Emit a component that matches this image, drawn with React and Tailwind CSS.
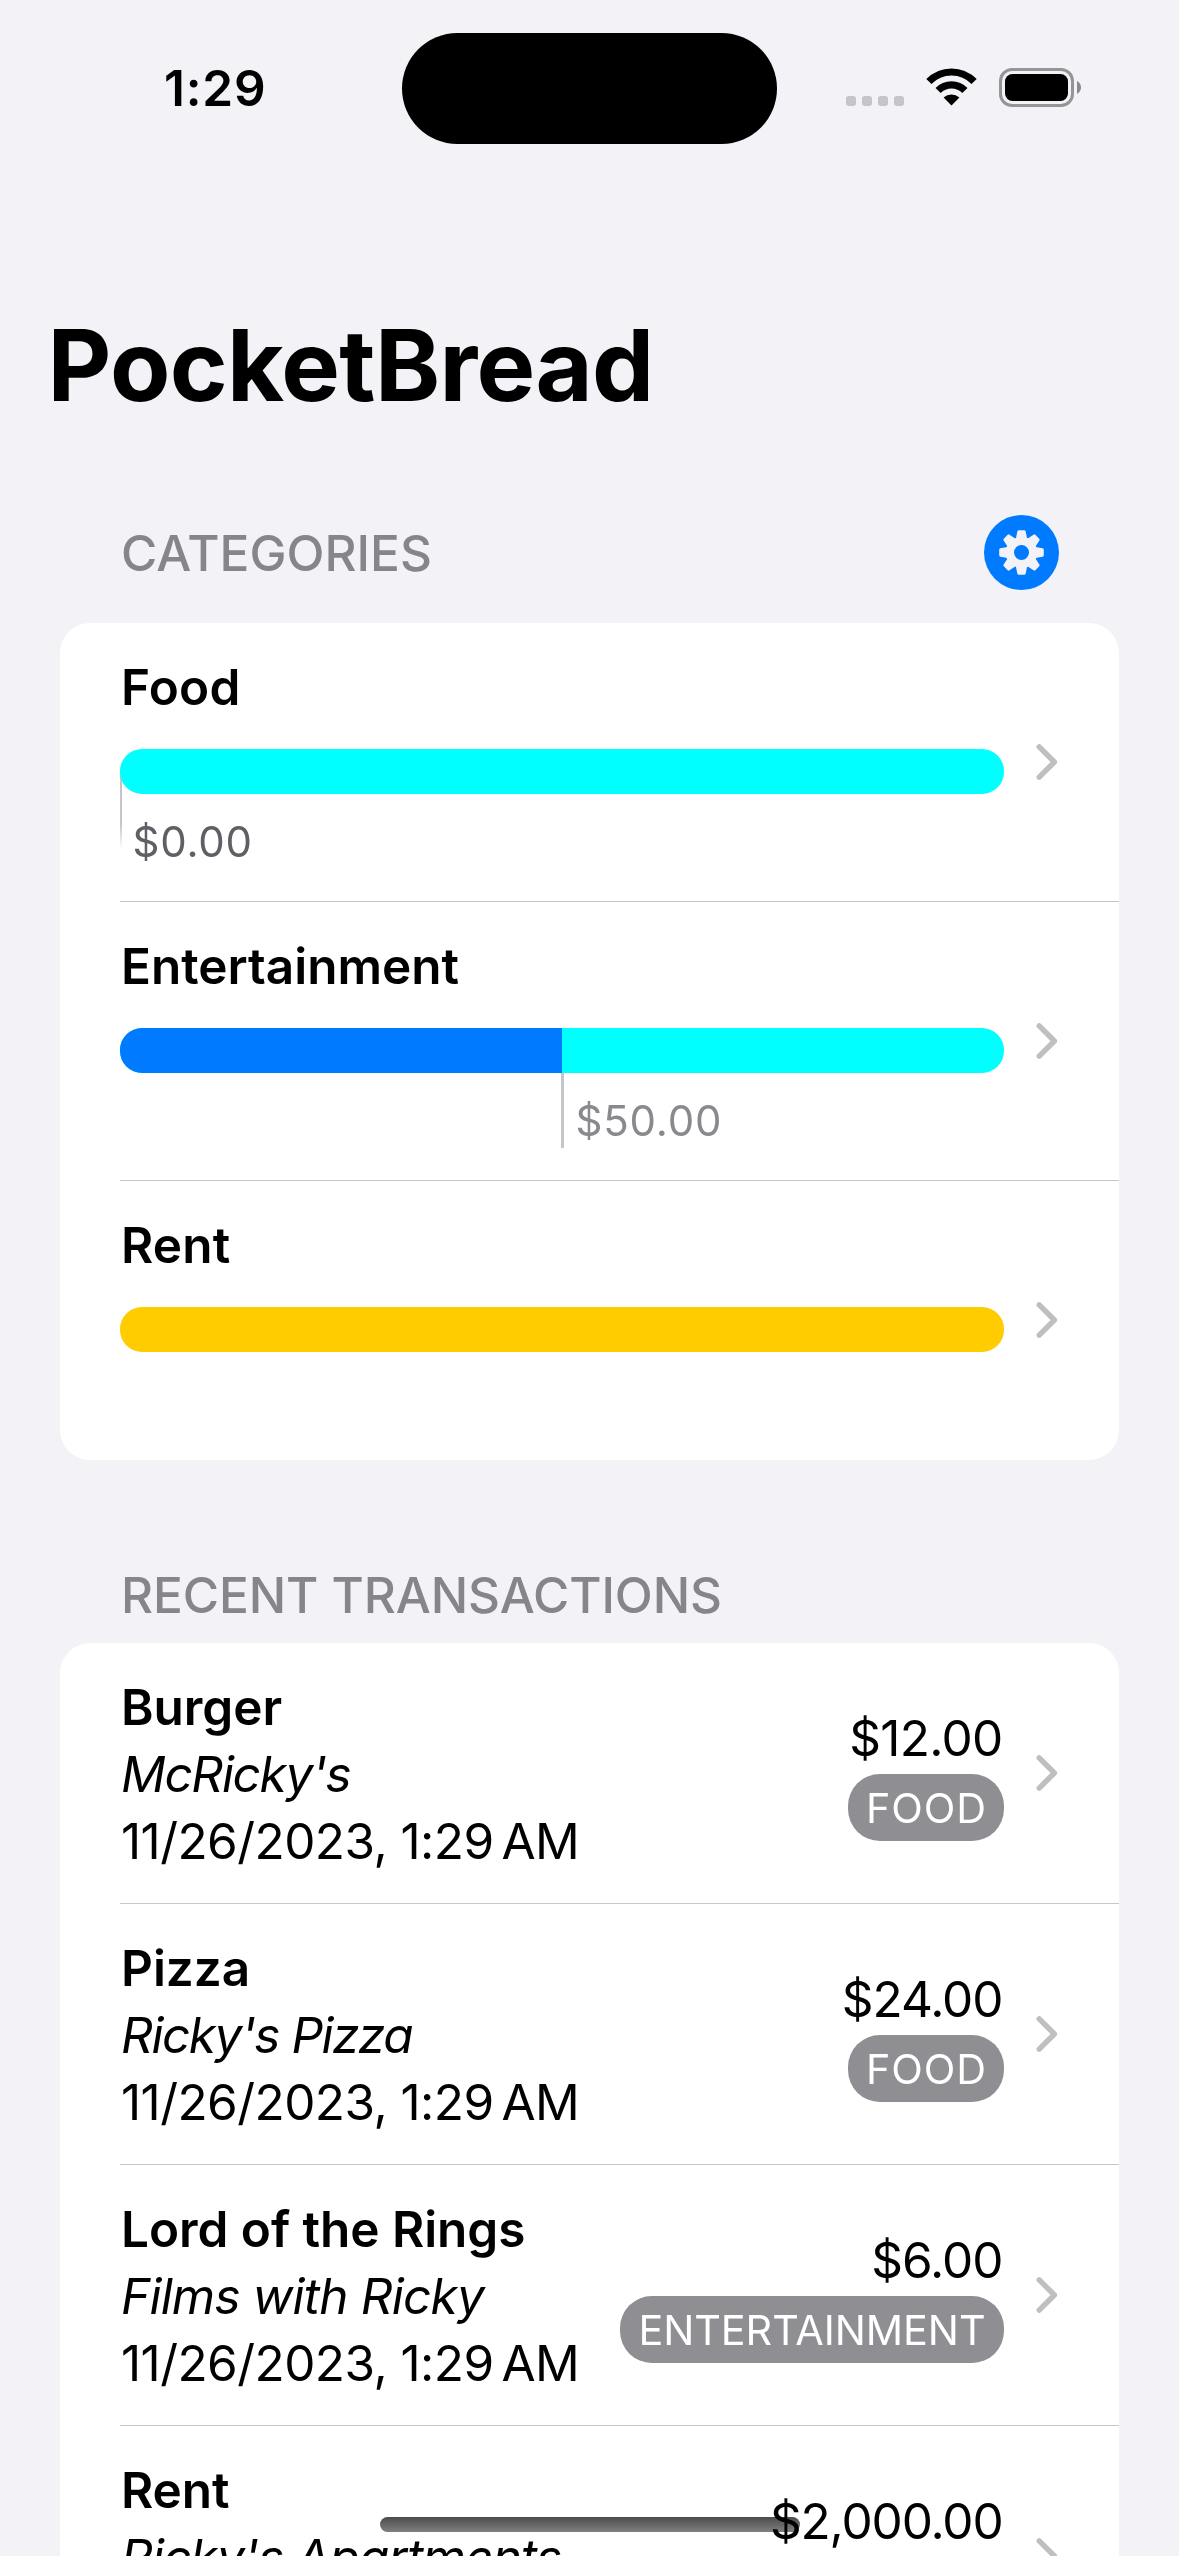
import React from "react";

const CATEGORIES = [
  { name: "Food", spent: "$0.00", fill: 0, track: "bg-[#00ffff]", tracking: "tracking-[0.2px]", label: "text-[#5f5f65]" },
  { name: "Entertainment", spent: "$50.00", fill: 50, track: "bg-[#00ffff]", tracking: "tracking-[0px]", label: "text-[#8a8a8e]" },
  { name: "Rent", spent: null, fill: 0, track: "bg-[#ffcc00]", tracking: "tracking-[0.2px]", label: "" },
];

const TRANSACTIONS = [
  { title: "Burger", place: "McRicky's", amount: "$12.00", tag: "FOOD", placeTracking: "tracking-[-1.33px]", amountTracking: "tracking-[-0.7px]", tagTracking: "tracking-[0.9px] pl-[18px] pr-[17px]" },
  { title: "Pizza", place: "Ricky's Pizza", amount: "$24.00", tag: "FOOD", placeTracking: "tracking-[-1.45px]", amountTracking: "tracking-[-1.04px]", tagTracking: "tracking-[0.9px] pl-[18px] pr-[17px]" },
  { title: "Lord of the Rings", place: "Films with Ricky", amount: "$6.00", tag: "ENTERTAINMENT", placeTracking: "tracking-[-0.8px]", amountTracking: "tracking-[-1px]", tagTracking: "tracking-[-0.05px] pl-[18.5px] pr-[18.5px]" },
  { title: "Rent", place: "Ricky's Apartments", amount: "$2,000.00", tag: "RENT", placeTracking: "tracking-[-0.85px]", amountTracking: "tracking-[-1.14px]", tagTracking: "tracking-[0.3px] px-[18px]" },
];

const TEETH = [0, 45, 90, 135, 180, 225, 270, 315];

function Chevron() {
  return (
    <svg viewBox="0 0 22 36" className="h-[36px] w-[22px] shrink-0" fill="none" stroke="#bfbfbf" strokeWidth="5.4" strokeLinecap="round" strokeLinejoin="round">
      <path d="M3.2 2.9 L18.4 18 L3.2 33.1" />
    </svg>
  );
}

function GearButton() {
  return (
    <button className="h-[75px] w-[75px]" aria-label="Settings">
      <svg viewBox="-37.5 -37.5 75 75" className="block h-full w-full">
        <circle r="37.5" fill="#007aff" />
        <circle r="15.7" fill="#f2f2f7" />
        {TEETH.map((a) => (
          <path key={a} d="M-2.7 -20.8 L2.7 -20.8 L3.9 -15 L-3.9 -15 Z" transform={`rotate(${a})`} fill="#f2f2f7" stroke="#f2f2f7" strokeWidth="3" strokeLinejoin="round" />
        ))}
        <circle r="7.5" fill="#007aff" />
      </svg>
    </button>
  );
}

function StatusBar() {
  return (
    <header className="flex h-[144px] pt-[33px]">
      <div className="flex w-[402px] items-center pl-[164px] text-[49.5px] leading-[67px] font-semibold tracking-[0.8px]">1:29</div>
      <div className="h-[111px] w-[375px] rounded-full bg-black" />
      <div className="flex flex-1 items-center pl-[69px]">
        <div className="mt-[25px] flex gap-[6px]">
          {[0, 1, 2, 3].map((i) => (
            <span key={i} className="h-[10px] w-[10px] rounded-[3px] bg-[#c4c4c9]" />
          ))}
        </div>
        <svg viewBox="0 0 51 38" className="mb-[3px] ml-[22px] h-[38px] w-[51px]" fill="none" stroke="#000" strokeWidth="7.2">
          <path d="M2.9 13.6 A31.4 31.4 0 0 1 48.1 13.6" />
          <path d="M12.1 22.6 A18.6 18.6 0 0 1 38.9 22.6" />
          <path d="M25.5 37.5 L17.6 29.6 A11.6 11.6 0 0 1 33.4 29.6 Z" fill="#000" stroke="none" />
        </svg>
        <svg viewBox="0 0 83 39" className="mb-[2px] ml-[22px] h-[39px] w-[83px]">
          <rect x="1.5" y="1.5" width="72" height="36" rx="11.5" fill="none" stroke="#959598" strokeWidth="3" />
          <rect x="6" y="6" width="63" height="27" rx="7.5" fill="#000" />
          <path d="M78 13 C80.6 14.4 82 16.8 82 19.5 C82 22.2 80.6 24.6 78 26 Z" fill="#8b8b8e" />
        </svg>
      </div>
    </header>
  );
}

function CategoryRow({ item, last }) {
  return (
    <li className="flex h-[279px] pl-[60px]">
      <div className={"flex flex-1 items-center border-b " + (last ? "border-transparent" : "border-[#c6c6c8]")}>
        <div className="relative w-[884px] self-stretch pt-[31px]">
          <h3 className={"pl-px text-[49.5px] leading-[67px] font-semibold " + item.tracking}>{item.name}</h3>
          {item.fill === 0 && item.spent && (
            <span className="absolute top-[146px] left-0 h-[80px] w-[2px] rounded-bl-[2px] bg-linear-to-b from-[#c6c6c8] from-70% to-white" />
          )}
          <div className={"relative mt-[28px] h-[45px] overflow-hidden rounded-[22px] " + item.track}>
            <div className="h-full bg-[#007aff]" style={{ width: `${item.fill}%` }} />
          </div>
          {item.spent && (
            <div className="flex" style={{ paddingLeft: `${item.fill}%` }}>
              {item.fill > 0 && <span className="-ml-px h-[75px] w-[3px] bg-[#c6c6c8]" />}
              <span className={"mt-[20px] text-[42px] leading-[56px] tracking-[0.8px] " + item.label + (item.fill > 0 ? " ml-[11.5px]" : " ml-[12.5px]")}>{item.spent}</span>
            </div>
          )}
        </div>
        <div className="ml-[31.5px]">
          <Chevron />
        </div>
      </div>
    </li>
  );
}

function TransactionRow({ item }) {
  return (
    <li className="flex h-[261px] shrink-0 pl-[60px]">
      <div className="flex flex-1 items-center border-b border-[#c6c6c8]">
        <div className="flex-1 pt-[3px] pl-px text-[49.5px] leading-[67px] whitespace-nowrap">
          <h3 className="font-semibold tracking-[-0.05px]">{item.title}</h3>
          <p className={"italic " + item.placeTracking}>{item.place}</p>
          <p className="tracking-[-0.55px]">
            11/26/2023, 1:29<span className="-ml-[0.5px]">{"\u202f"}AM</span>
          </p>
        </div>
        <div className="flex flex-col items-end gap-[2px]">
          <p className={"pr-[1.5px] text-[49.5px] leading-[67px] " + item.amountTracking}>{item.amount}</p>
          <span className={"h-[67px] rounded-[32px] bg-[#8e8e93] text-[41.3px] leading-[68px] text-white " + item.tagTracking}>{item.tag}</span>
        </div>
        <div className="mr-[61px] ml-[32px]">
          <Chevron />
        </div>
      </div>
    </li>
  );
}

export default function App() {
  return (
    <main className="relative flex h-[2556px] w-[1179px] flex-col overflow-hidden bg-[#f2f2f7] font-['Inter',sans-serif] text-black">
      <StatusBar />
      <h1 className="mt-[161px] ml-[47.5px] text-[98.6px] leading-[120px] font-bold tracking-[-0.69px]">PocketBread</h1>

      <section className="mt-[90px] px-[60px]">
        <div className="flex h-[75px] items-center justify-between px-[60px]">
          <h2 className="pt-[2px] pl-px text-[49.5px] leading-[67px] font-[530] tracking-[0.05px] text-[#85858b]">CATEGORIES</h2>
          <GearButton />
        </div>
        <ul className="mt-[33px] overflow-hidden rounded-[30px] bg-white">
          {CATEGORIES.map((c, i) => (
            <CategoryRow key={c.name} item={c} last={i === CATEGORIES.length - 1} />
          ))}
        </ul>
      </section>

      <section className="mt-[102px] px-[60px]">
        <h2 className="px-[61px] text-[49.5px] leading-[67px] font-[530] tracking-[-0.08px] text-[#85858b]">RECENT TRANSACTIONS</h2>
        <ul className="mt-[14px] overflow-hidden rounded-[30px] bg-white">
          {TRANSACTIONS.map((t) => (
            <TransactionRow key={t.title} item={t} />
          ))}
        </ul>
      </section>

      <div className="absolute top-[2517px] left-[380px] h-[15px] w-[420px] rounded-full bg-linear-to-b from-[#4c4c4c] to-[#808080] mix-blend-multiply" />
    </main>
  );
}
